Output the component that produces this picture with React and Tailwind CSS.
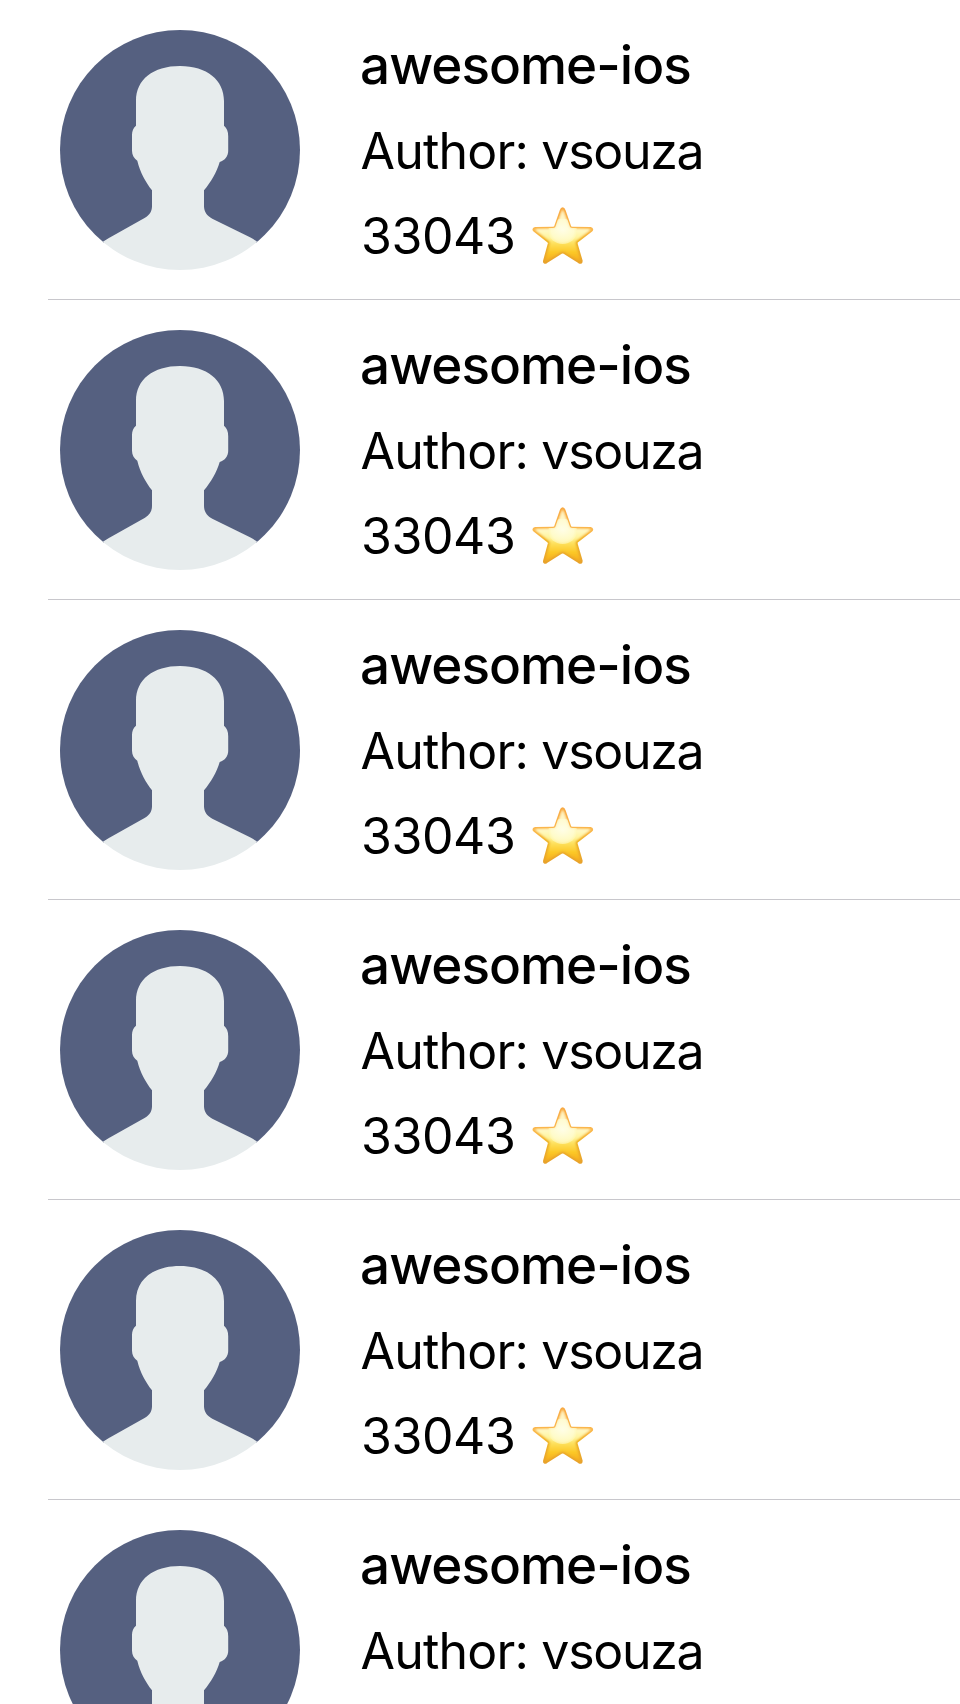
const repositories = Array.from({ length: 6 }, (_, id) => ({
  id,
  name: 'awesome-ios',
  author: 'vsouza',
  stars: 33043,
}));

function Avatar() {
  return (
    <div className="size-[240px] shrink-0 overflow-hidden rounded-full">
      <svg viewBox="0 0 240 240" className="block size-full" aria-hidden="true">
        <path fill="#556080" d="M0 0H240V213H0Z" />
        <path
          fill="#e7eced"
          d="M120 36C93 36 76 49.500 76 71V95.700C73.300 98 72 101 72 105V120.700C72 125 74 128.500 77.300 130.700C80 142 85.500 152 92 160.300V176C92 181.500 89.500 185 85 187.700L48.500 208.300C46.500 209.400 44.800 210.500 43.300 211.500L35 213V240H205V213L196.700 211.500C195 210 192.500 208.600 190 207.300L152.300 188.700C147 186 144 181.500 144 176V160.300C151 152 156.500 142.500 159.700 132C165 130.500 168.200 126 168.200 121V106C168.200 101.500 166.800 98 164 95.700V71C164 50 147 36 120 36Z"
        />
      </svg>
    </div>
  );
}

function Star({ id }) {
  const path =
    'M128 41Q131 41 133 47L150 96Q152 99 157 99L211 100Q219 102 213 107L171 139Q168 142 169 147L184 198Q184 205 177 201L133 173Q128 170 123 173L79 201Q72 205 73 198L87 147Q88 142 85 139L44 107Q38 102 46 100L99 99Q104 99 106 96L123 47Q125 41 128 41Z';
  return (
    <svg
      viewBox="30 30 198 186"
      className="h-[62px] w-[66px] shrink-0"
      role="img"
      aria-label="stars"
    >
      <defs>
        <linearGradient id={`edge-${id}`} x1="0" y1="0" x2="0" y2="1">
          <stop offset="0" stopColor="#f8ab45" />
          <stop offset="0.4" stopColor="#fbb84e" />
          <stop offset="0.62" stopColor="#f0b72a" />
          <stop offset="1" stopColor="#e8a22c" />
        </linearGradient>
        <linearGradient id={`body-${id}`} x1="0" y1="0" x2="0" y2="1">
          <stop offset="0" stopColor="#fff0bb" />
          <stop offset="0.35" stopColor="#fffbd2" />
          <stop offset="0.55" stopColor="#fff49a" />
          <stop offset="0.64" stopColor="#fee260" />
          <stop offset="0.82" stopColor="#fcc928" />
          <stop offset="1" stopColor="#f6ad1c" />
        </linearGradient>
        <radialGradient id={`shine-${id}`} cx="128" cy="106" r="48" gradientUnits="userSpaceOnUse">
          <stop offset="0" stopColor="#fffff0" />
          <stop offset="0.7" stopColor="#fffdd4" />
          <stop offset="1" stopColor="#fff6a8" stopOpacity="0.7" />
        </radialGradient>
        <clipPath id={`clip-${id}`}>
          <path d={path} />
        </clipPath>
        <filter id={`soft-${id}`} x="-10%" y="-10%" width="120%" height="120%">
          <feGaussianBlur stdDeviation="4" />
        </filter>
      </defs>
      <path
        d={path}
        fill={`url(#edge-${id})`}
        stroke={`url(#edge-${id})`}
        strokeWidth="8"
        strokeLinejoin="round"
      />
      <g clipPath={`url(#clip-${id})`}>
        <path
          d={path}
          transform="translate(128 124) scale(0.94) translate(-128 -124)"
          fill={`url(#body-${id})`}
          filter={`url(#soft-${id})`}
        />
        <ellipse cx="128" cy="109" rx="43" ry="38" fill={`url(#shine-${id})`} opacity="0.75" />
      </g>
    </svg>
  );
}

function RepositoryRow({ repository }) {
  return (
    <li className="flex h-[300px] border-b border-[#c8c7cc] pt-[30px] pl-3">
      <Avatar />
      <div className="ml-[61px] flex flex-col whitespace-nowrap">
        <h2 className="-ml-px h-[85px] text-[53px] leading-[71px] font-medium tracking-[-0.97px]">
          {repository.name}
        </h2>
        <p className="-ml-[0.5px] h-[90px] text-[50px] leading-[72px] tracking-[-0.8px]">
          Author: <span className="tracking-[-1.3px]">{repository.author}</span>
        </p>
        <div className="flex h-[62px] items-center text-[50px] leading-[62px]">
          <span className="w-[169px] tracking-[-0.4px]">{repository.stars}</span>
          <Star id={repository.id} />
        </div>
      </div>
    </li>
  );
}

export default function App() {
  return (
    <main className="h-[1704px] w-[960px] overflow-hidden bg-white font-['Inter',sans-serif] text-black">
      <ul className="pl-12">
        {repositories.map((repository) => (
          <RepositoryRow key={repository.id} repository={repository} />
        ))}
      </ul>
    </main>
  );
}
